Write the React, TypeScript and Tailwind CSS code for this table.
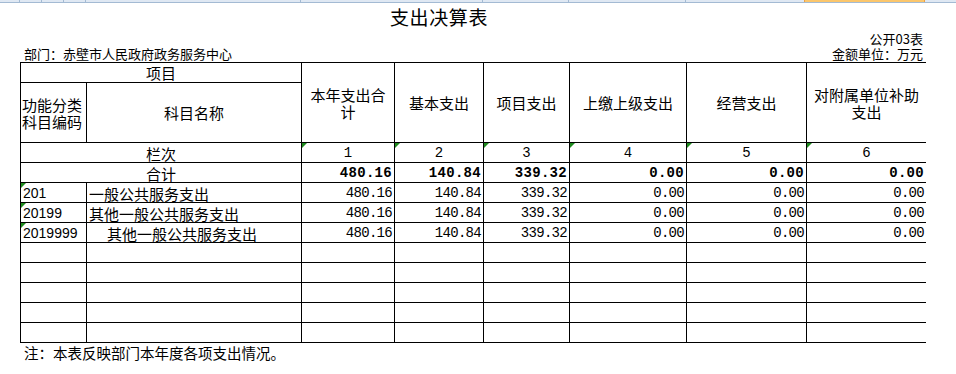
import React from "react"

const cjk = "font-['Noto_Sans_CJK_SC','Noto_Sans',sans-serif]"
const mono = "font-['Liberation_Mono','DejaVu_Sans_Mono',monospace]"
const sans = "font-['Liberation_Sans',Arial,sans-serif]"

function Mark() {
  return (
    <svg className="absolute left-0 top-0" width="5" height="5" viewBox="0 0 5 5">
      <polygon points="0,0 5,0 0,5" fill="#1e8a1e" />
    </svg>
  )
}

function Cell({
  className = "",
  children,
  mark = false,
}: {
  className?: string
  children?: React.ReactNode
  mark?: boolean
}) {
  return (
    <div className={`relative bg-white flex ${className}`}>
      {mark && <Mark />}
      {children}
    </div>
  )
}

const rows = [
  { code: "201", name: "一般公共服务支出", indent: false },
  { code: "20199", name: "其他一般公共服务支出", indent: false },
  { code: "2019999", name: "其他一般公共服务支出", indent: true },
]

const values = ["480.16", "140.84", "339.32", "0.00", "0.00", "0.00"]

export default function App() {
  return (
    <div className={`w-[956px] h-[374px] bg-white overflow-hidden text-black ${cjk}`}>
      {/* excel column header strip */}
      <div className="flex h-[3px] bg-[#dfe8f3] border-b border-[#a3bad3]">
        <div className="w-[20px] border-r border-[#a3bad3]" />
        <div className="w-[22px] border-r border-[#a3bad3]" />
        <div className="w-[22px] border-r border-[#a3bad3]" />
        <div className="w-[22px] border-r border-[#a3bad3]" />
        <div className="w-[215px] border-r border-[#a3bad3]" />
        <div className="w-[182px] border-r border-[#a3bad3]" />
        <div className="w-[86px] border-r border-[#a3bad3]" />
        <div className="w-[117px] border-r border-[#a3bad3]" />
        <div className="w-[119px] border-r border-[#f0a040]" />
        <div className="w-[120px] bg-[#fbc66c] border-r border-[#f0a040]" />
        <div className="flex-1" />
      </div>

      <div className="h-[28px] pt-[4px] pl-[390px] text-[19px] leading-[20px] tracking-[0.6px]">
        支出决算表
      </div>

      <div className="ml-[20px] w-[906px]">
        <div className="h-[15px] text-right pr-[3px] text-[13px] leading-[15px]">公开03表</div>
        <div className="h-[16px] flex justify-between pl-[4px] pr-[3px] text-[13px] leading-[15px]">
          <span>部门：赤壁市人民政府政务服务中心</span>
          <span>金额单位：万元</span>
        </div>

        <div className="grid grid-cols-[65px_214px_92px_88px_85px_116px_119px_119px] grid-rows-[19px_59px_repeat(10,19px)] gap-px p-px bg-black text-[15px] leading-[17px]">
          <Cell className="col-span-2 items-center justify-center">项目</Cell>
          <Cell className="row-span-2 items-center justify-center text-center">
            本年支出合
            <br />
            计
          </Cell>
          <Cell className="row-span-2 items-center justify-center">基本支出</Cell>
          <Cell className="row-span-2 items-center justify-center">项目支出</Cell>
          <Cell className="row-span-2 items-center justify-center">上缴上级支出</Cell>
          <Cell className="row-span-2 items-center justify-center">经营支出</Cell>
          <Cell className="row-span-2 items-center justify-center text-center">
            对附属单位补助
            <br />
            支出
          </Cell>
          <Cell className="items-center pl-[1px]">
            功能分类
            <br />
            科目编码
          </Cell>
          <Cell className="items-center justify-center">科目名称</Cell>

          <Cell className="col-span-2 items-end justify-center">栏次</Cell>
          {[1, 2, 3, 4, 5, 6].map(n => (
            <Cell key={n} mark className={`items-end justify-center ${mono} text-[14px] leading-[17px]`}>
              {n}
            </Cell>
          ))}

          <Cell className="col-span-2 items-end justify-center">合计</Cell>
          {values.map((v, i) => (
            <Cell
              key={i}
              className={`items-end justify-end pr-[2px] ${mono} font-bold text-[14px] leading-[17px] tracking-[0.3px]`}
            >
              {v}
            </Cell>
          ))}

          {rows.map(r => (
            <React.Fragment key={r.code}>
              <Cell mark className={`items-end pl-[2px] ${sans} text-[14px] leading-[17px]`}>
                {r.code}
              </Cell>
              <Cell className={`items-end ${r.indent ? "pl-[20px]" : "pl-[2px]"}`}>{r.name}</Cell>
              {values.map((v, i) => (
                <Cell
                  key={i}
                  className={`items-end justify-end pr-[2px] ${mono} text-[14px] leading-[17px] tracking-[-0.7px]`}
                >
                  {v}
                </Cell>
              ))}
            </React.Fragment>
          ))}

          {Array.from({ length: 40 }).map((_, i) => (
            <Cell key={`e${i}`} />
          ))}
        </div>

        <div className="mt-[2px] pl-[4px] text-[14.5px] leading-[15px]">
          注：本表反映部门本年度各项支出情况。
        </div>
      </div>
    </div>
  )
}
